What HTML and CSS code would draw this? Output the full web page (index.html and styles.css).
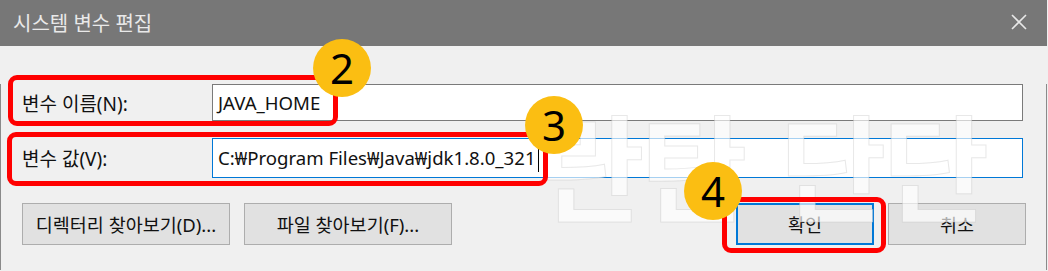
FILE: index.html
```html
<html>
<head>
<meta charset="utf-8">
<link rel="stylesheet" href="styles.css">
</head>
<body>
<div class="dialog">
  <div class="titleBar">
    <span class="titleText">시스템 변수 편집</span>
    <svg class="closeIcon" width="16" height="16" viewBox="0 0 16 16">
      <path d="M1 1 L15 15 M15 1 L1 15" stroke="#e8e8e8" stroke-width="1.6" fill="none"/>
    </svg>
  </div>

  <div class="content">
    <div class="fieldRow rowName">
      <div class="fieldLabel">변수 이름(N):</div>
      <div class="fieldInput">JAVA_HOME</div>
    </div>
    <div class="fieldRow rowValue">
      <div class="fieldLabel">변수 값(V):</div>
      <div class="fieldInput focused">C:₩Program Files₩Java₩jdk1.8.0_321<span class="caret"></span></div>
    </div>
    <div class="buttonRow">
      <div class="btn btnWide">디렉터리 찾아보기(D)...</div>
      <div class="btn btnWide">파일 찾아보기(F)...</div>
      <div class="spacer"></div>
      <div class="btn btnSmall defaultBtn">확인</div>
      <div class="btn btnSmall">취소</div>
    </div>
    <div class="grip">
      <svg width="10" height="10" viewBox="0 0 10 10">
        <rect x="7" y="1" width="2" height="2" fill="#b5b5b5"/>
        <rect x="4" y="4" width="2" height="2" fill="#b5b5b5"/>
        <rect x="7" y="4" width="2" height="2" fill="#b5b5b5"/>
        <rect x="1" y="7" width="2" height="2" fill="#b5b5b5"/>
        <rect x="4" y="7" width="2" height="2" fill="#b5b5b5"/>
        <rect x="7" y="7" width="2" height="2" fill="#b5b5b5"/>
      </svg>
    </div>
  </div>

  <!-- watermark + annotation overlays -->
  <div class="watermark">란탄 단단</div>
  <div class="markBox markName"></div>
  <div class="markBox markValue"></div>
  <div class="markBox markOk"></div>
  <div class="stepBadge step2">2</div>
  <div class="stepBadge step3">3</div>
  <div class="stepBadge step4">4</div>
</div>
</body>
</html>
```

FILE: styles.css
```css
body {
    margin: 0;
    background-color: #f0f0f0;
    font-family: "Noto Sans", "Noto Sans CJK KR", sans-serif;
}

.dialog {
    position: relative;
    width: 1047px;
    height: 270px;
    overflow: hidden;
}

.titleBar {
    height: 46px;
    background-color: #777777;
    display: flex;
    align-items: center;
    justify-content: space-between;
    padding: 0 20px 0 13px;
}

.titleText {
    color: #e9e9e9;
    font-size: 20px;
    margin-top: -2px;
}

.closeIcon {
    margin-top: -2px;
}

.content {
    position: relative;
    height: 223px;
    border: 1px solid #8a8a8a;
    border-top: none;
    background-color: #f0f0f0;
}

.fieldRow {
    display: flex;
    align-items: center;
    padding-left: 21px;
}

.rowName {
    margin-top: 38px;
}

.rowValue {
    margin-top: 17px;
}

.fieldLabel {
    width: 190px;
    font-size: 19px;
    color: #111;
}

.fieldInput {
    width: 804px;
    height: 35px;
    line-height: 35px;
    padding-left: 5px;
    font-size: 18.6px;
    color: #111;
    background-color: #fff;
    border: 1px solid #7a7a7a;
    white-space: nowrap;
}

.fieldInput.focused {
    height: 38px;
    line-height: 38px;
    border-color: #0078d7;
}

.caret {
    display: inline-block;
    width: 1px;
    height: 24px;
    background-color: #000;
    vertical-align: middle;
    margin-left: 2px;
}

.buttonRow {
    display: flex;
    margin-top: 25px;
    padding: 0 20px 0 21px;
    gap: 14px;
}

.spacer {
    flex: 1;
}

.btn {
    height: 40px;
    border: 1px solid #adadad;
    background-color: #e1e1e1;
    display: flex;
    align-items: center;
    justify-content: center;
    font-size: 18.5px;
    color: #111;
}

.btnWide {
    width: 206px;
}

.btnSmall {
    width: 136px;
}

.defaultBtn {
    border: 2px solid #0078d7;
    width: 134px;
    height: 38px;
}

.grip {
    position: absolute;
    right: 2px;
    bottom: 1px;
    line-height: 0;
}

.watermark {
    position: absolute;
    left: 538px;
    top: 104px;
    font-family: "Noto Sans CJK KR", sans-serif;
    font-weight: 700;
    font-size: 116px;
    line-height: 1;
    letter-spacing: -4px;
    word-spacing: 14px;
    white-space: pre;
    color: rgba(255, 255, 255, 0.65);
    -webkit-text-stroke: 1px rgba(190, 190, 190, 0.35);
}

.markBox {
    position: absolute;
    border: 5px solid #ff0000;
    border-radius: 9px;
}

.markName {
    left: 8px;
    top: 75px;
    width: 320px;
    height: 41px;
}

.markValue {
    left: 7px;
    top: 132px;
    width: 531px;
    height: 44px;
}

.markOk {
    left: 722px;
    top: 197px;
    width: 154px;
    height: 46px;
}

.stepBadge {
    position: absolute;
    width: 58px;
    height: 58px;
    border-radius: 50%;
    background-color: #fbbe12;
    color: #000;
    font-size: 42px;
    line-height: 58px;
    text-align: center;
}

.step2 {
    left: 313px;
    top: 39px;
}

.step3 {
    left: 525px;
    top: 96px;
}

.step4 {
    left: 684px;
    top: 162px;
}
```
